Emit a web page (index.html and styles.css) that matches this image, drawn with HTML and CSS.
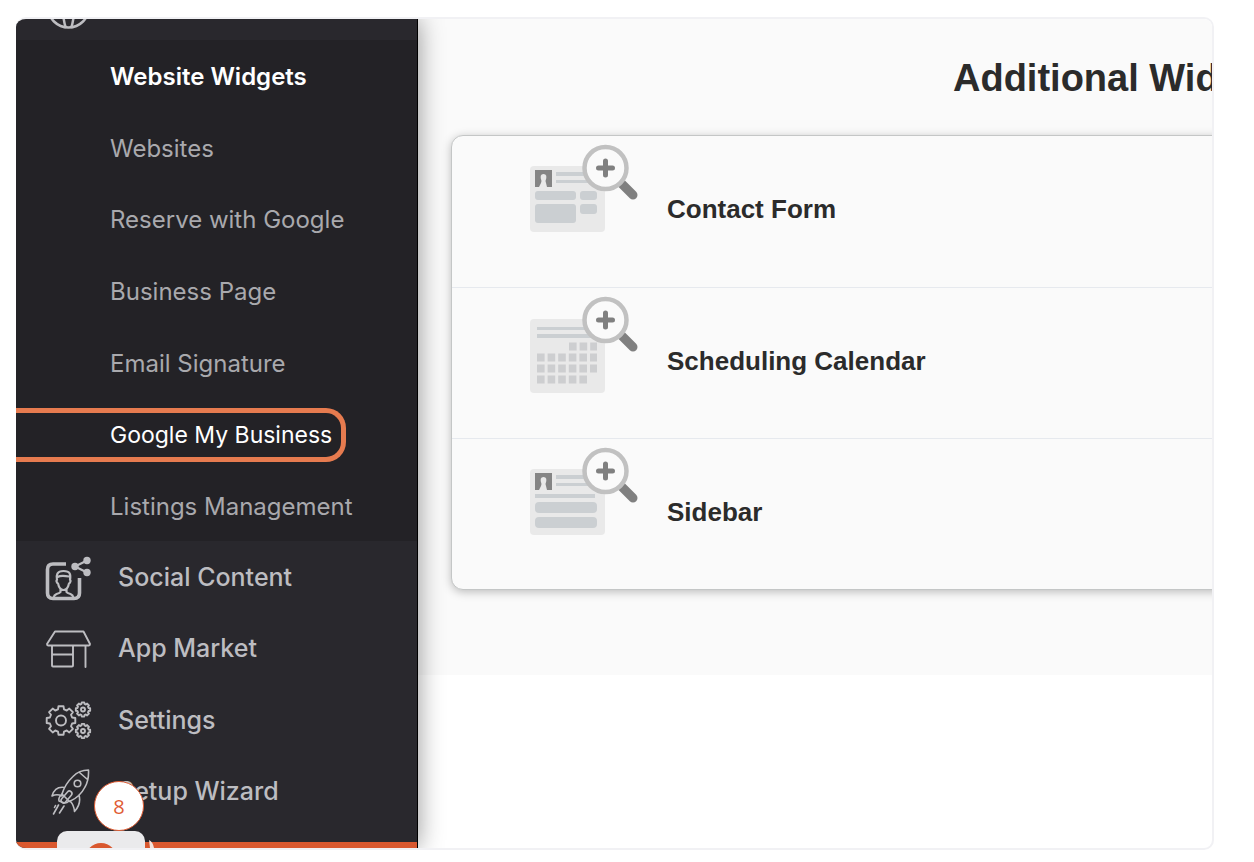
FILE: index.html
```html
<!DOCTYPE html>
<html lang="en">
<head>
<meta charset="utf-8">
<title>Additional Widgets</title>
<link rel="stylesheet" href="styles.css">
</head>
<body>
<div class="frame">
  <nav class="sidebar" aria-label="Main">
    <div class="sidebar-top">
      <svg class="globe" width="48" height="11" viewBox="0 0 48 11" aria-hidden="true">
        <circle cx="23.500" cy="-12" r="20.500"/>
        <path d="M18 -12Q18 2 21 9M29 -12Q29 2 26 9"/>
      </svg>
    </div>
    <ul class="submenu">
      <li><a class="current" href="#">Website Widgets</a></li>
      <li><a href="#">Websites</a></li>
      <li><a href="#">Reserve with Google</a></li>
      <li><a href="#">Business Page</a></li>
      <li><a href="#">Email Signature</a></li>
      <li><a class="highlight" href="#">Google My Business</a></li>
      <li><a href="#">Listings Management</a></li>
    </ul>
    <ul class="menu">
      <li><a href="#">
        <svg class="icon" viewBox="0 0 48 48" aria-hidden="true">
          <path class="thick" d="M21 11H8Q2.500 11 2.500 16.500V40Q2.500 45.500 8 45.500H29Q34.500 45.500 34.500 40V25"/>
          <path class="mid" d="M18.500 18C12 18 11 22 12 27C11 27 11.500 30 13 30.500C14 35 16 37 18.500 37S23 35 24 30.500C25.500 30 26 27 25 27C26 21 25 18 18.500 18ZM15.500 36V39Q15 40 11.500 41Q9 42 8.500 45M21.500 36V39Q22 40 25.500 41Q28 42 28.500 45M12.500 24Q16 22 24 23.500"/>
          <path class="mid" d="M42 7.500L30 13.500L42 19.500"/>
          <g class="dot"><circle cx="42" cy="7.500" r="3.700"/><circle cx="30" cy="13.500" r="3.700"/><circle cx="42" cy="19.500" r="3.700"/></g>
        </svg>Social Content</a></li>
      <li><a href="#">
        <svg class="icon" viewBox="0 0 48 48" aria-hidden="true">
          <path d="M10 7.500H38.500L45 20Q45 21.500 44 21.500H3Q2 21.500 2 20ZM7 21.500V41.500Q7 42.500 8 42.500H27Q28 42.500 28 41.500V21.500M7 30.500H28M40.500 21.500V43"/>
        </svg>App Market</a></li>
      <li><a href="#">
        <svg class="icon" viewBox="0 0 48 48" aria-hidden="true">
          <defs><path id="gear" vector-effect="non-scaling-stroke" d="M11.100 -3L14.300 -2.500V2.500L11.100 3L10 5.750L11.900 8.300L8.300 11.900L5.750 10L3 11.100L2.500 14.300H-2.500L-3 11.100L-5.750 10L-8.300 11.900L-11.900 8.300L-10 5.750L-11.100 3L-14.300 2.500V-2.500L-11.100 -3L-10 -5.750L-11.900 -8.300L-8.300 -11.900L-5.750 -10L-3 -11.100L-2.500 -14.300H2.500L3 -11.100L5.750 -10L8.300 -11.900L11.900 -8.300L10 -5.750Z"/></defs>
          <use href="#gear" transform="translate(16 24.500)"/><circle cx="16" cy="24.500" r="5"/>
          <use href="#gear" transform="translate(38 13.500) scale(.5)"/><circle cx="38" cy="13.500" r="2"/>
          <use href="#gear" transform="translate(38 35) scale(.5)"/><circle cx="38" cy="35" r="2"/>
        </svg>Settings</a></li>
      <li><a href="#">
        <svg class="icon" viewBox="0 0 48 48" aria-hidden="true">
          <path class="thin" d="M43.500 3Q34 3 28 9.500Q20 17 17 27L24.500 34.500Q35 30 40 20Q44 13 43.500 3ZM34.500 5.500L42.500 12.500M19.500 20.500Q10 19 7 29Q12 26.500 17 29M34 28Q36.500 37 29.500 44.500Q29 38 25 34M13.500 38L8.500 47M19 39L14.500 46M10.500 38.500L9.500 40.500"/>
          <circle class="thin" cx="32.500" cy="16.500" r="3.300"/>
          <rect class="thin" x="19" y="23" width="5" height="14" rx="2.500" transform="rotate(40 21.500 30)"/>
          <path class="thin" d="M17 27Q13 31 14 34L18 35.500M24 34Q21 37 18 35.500"/>
        </svg>Setup Wizard</a></li>
    </ul>
    <div class="launcher" aria-hidden="true">
      <svg width="88" height="17" viewBox="0 0 88 17"><circle cx="44" cy="28" r="16"/></svg>
    </div>
    <svg class="spark" width="6" height="8" viewBox="0 0 6 8" aria-hidden="true"><path d="M0 0Q4 2 5 8H1Z"/></svg>
    <span class="step">8</span>
  </nav>
  <main class="main">
    <section class="widgets">
      <h1>Additional Widgets</h1>
      <ul class="card">
        <li>
          <svg class="thumb" viewBox="0 0 108 98" aria-hidden="true">
            <rect class="sheet" y="22" width="75" height="66" rx="4"/>
            <path class="dark" d="M5 26H22V43H17L16 39L15.500 37Q18 30 13.500 30T11.500 37L11 39L9 43H5Z"/>
            <path class="bar" d="M26 28H58V32H26ZM26 36H62V39H26Z"/>
            <g class="bar"><rect x="5" y="47" width="41" height="9" rx="3"/><rect x="50" y="47" width="17" height="9" rx="3"/><rect x="5" y="60" width="41" height="19" rx="3"/><rect x="50" y="60" width="17" height="10" rx="3"/></g>
            <g id="lens"><path class="handle" d="M92 40L103 51"/><circle class="ring" cx="75.500" cy="24" r="21"/><path class="plus" d="M68.500 24H82.500M75.500 17V31"/></g>
          </svg>
          <h2>Contact Form</h2>
        </li>
        <li>
          <svg class="thumb" viewBox="0 0 108 98" aria-hidden="true">
            <rect class="sheet" y="23" width="75" height="74" rx="4"/>
            <path class="bar" d="M7 31H58V34H7ZM7 38H66V42H7Z"/>
            <path class="days" d="M39 50.500H67M7 61.500H67M7 72.500H67M7 83.500H57"/>
            <use href="#lens"/>
          </svg>
          <h2>Scheduling Calendar</h2>
        </li>
        <li>
          <svg class="thumb" viewBox="0 0 108 98" aria-hidden="true">
            <rect class="sheet" y="22" width="75" height="66" rx="4"/>
            <path class="dark" d="M5 26H22V43H17L16 39L15.500 37Q18 30 13.500 30T11.500 37L11 39L9 43H5Z"/>
            <path class="bar" d="M26 28H58V32H26ZM26 36H62V39H26ZM5 47H65V51H5Z"/>
            <g class="bar"><rect x="5" y="55" width="62" height="11" rx="4"/><rect x="5" y="70" width="62" height="11" rx="4"/></g>
            <use href="#lens"/>
          </svg>
          <h2>Sidebar</h2>
        </li>
      </ul>
    </section>
  </main>
</div>
</body>
</html>
```
FILE: styles.css
```css
*, *::before, *::after { box-sizing: border-box; }
body { margin: 0; padding: 17px 40px 12px 16px; background: #fff; font-family: "Liberation Sans", Arial, sans-serif; }
ul { list-style: none; margin: 0; padding: 0; }
h1, h2 { margin: 0; color: #2b2b2b; white-space: nowrap; }

.frame { display: flex; border: 2px solid #f1f1f4; border-left: 0; border-radius: 10px; overflow: hidden; }

/* Sidebar */
.sidebar { position: relative; z-index: 1; flex: none; width: 402px; padding-bottom: 21px; background: #29282d; border-right: 1px solid #000; box-shadow: 0 0 24px rgba(0, 0, 0, .42); font-family: Inter, "Open Sans", sans-serif; }
.sidebar::after { content: ""; position: absolute; left: 0; right: 0; bottom: 0; height: 6px; background: #d9582f; }
.sidebar-top { height: 21px; padding-left: 29px; }
.globe { display: block; fill: none; stroke: #bdbdc1; stroke-width: 2.5; }
.submenu { display: grid; grid-auto-rows: 1fr; height: 501px; background: #232226; }
.menu { display: grid; grid-auto-rows: 1fr; height: 286px; }
.submenu a, .menu a { display: flex; align-items: center; height: 100%; text-decoration: none; white-space: nowrap; }
.submenu a { position: relative; padding: 2px 0 0 94px; font-size: 24px; color: #a9a9ad; }
.submenu .current { font-weight: 600; color: #fff; }
.submenu .highlight { font-size: 23px; color: #fff; }
.highlight::after { content: ""; position: absolute; left: 0; width: 330px; height: 54px; border: 5px solid #e67b4f; border-left: 0; border-radius: 0 20px 20px 0; }
.menu a { gap: 25px; padding-left: 29px; font-size: 25px; font-weight: 500; color: #bdbdc1; }
.icon { flex: none; width: 48px; height: 48px; fill: none; stroke: #bdbdc1; stroke-width: 1.9; stroke-linejoin: round; stroke-linecap: round; }
.thick { stroke-width: 3.6; stroke-linecap: butt; }
.mid { stroke-width: 2.2; }
.thin { stroke-width: 1.6; }
.dot { fill: #bdbdc1; stroke: none; }

.launcher { position: absolute; z-index: 1; left: 41px; bottom: 0; height: 17px; background: #eaeaec; border-radius: 10px 10px 0 0; overflow: hidden; }
.launcher svg { display: block; fill: #d9582f; }
.spark { position: absolute; z-index: 1; left: 133px; bottom: 0; fill: #f3e3dd; }
.step { position: absolute; z-index: 2; left: 78px; bottom: 17px; width: 50px; height: 50px; border: 1px solid #df5c33; border-radius: 50%; background: #fff; color: #df5c33; font: 20px/49px "Open Sans", sans-serif; text-align: center; }

/* Main panel */
.main { flex: 1; min-width: 0; overflow: hidden; }
.widgets { width: 1200px; padding: 36px 0 85px 33px; background: #fafafa; }
.widgets h1 { padding-left: 502px; font-size: 38px; line-height: 46px; }
.card { margin-top: 34px; border: 1px solid #c4c6c6; border-radius: 12px; background: #fafafa; box-shadow: 0 2px 10px rgba(0, 0, 0, .25); }
.card li { display: flex; align-items: flex-start; gap: 29px; height: 151px; padding: 8px 0 0 78px; }
.card li + li { border-top: 1px solid #e6e9ee; }
.card h2 { padding-top: 49px; font-size: 26px; line-height: 32px; }
.thumb { flex: none; width: 108px; height: 98px; }
.sheet { fill: #e9e9e9; }
.bar { fill: #cbcfd2; }
.dark { fill: #858585; }
.days { fill: none; stroke: #cdced0; stroke-width: 8; stroke-dasharray: 7.600 3; }
.handle { stroke: #808080; stroke-width: 9; stroke-linecap: round; }
.ring { fill: #fafafa; stroke: #c1c1c1; stroke-width: 4.500; }
.plus { fill: none; stroke: #808080; stroke-width: 5; stroke-linecap: round; }
```
